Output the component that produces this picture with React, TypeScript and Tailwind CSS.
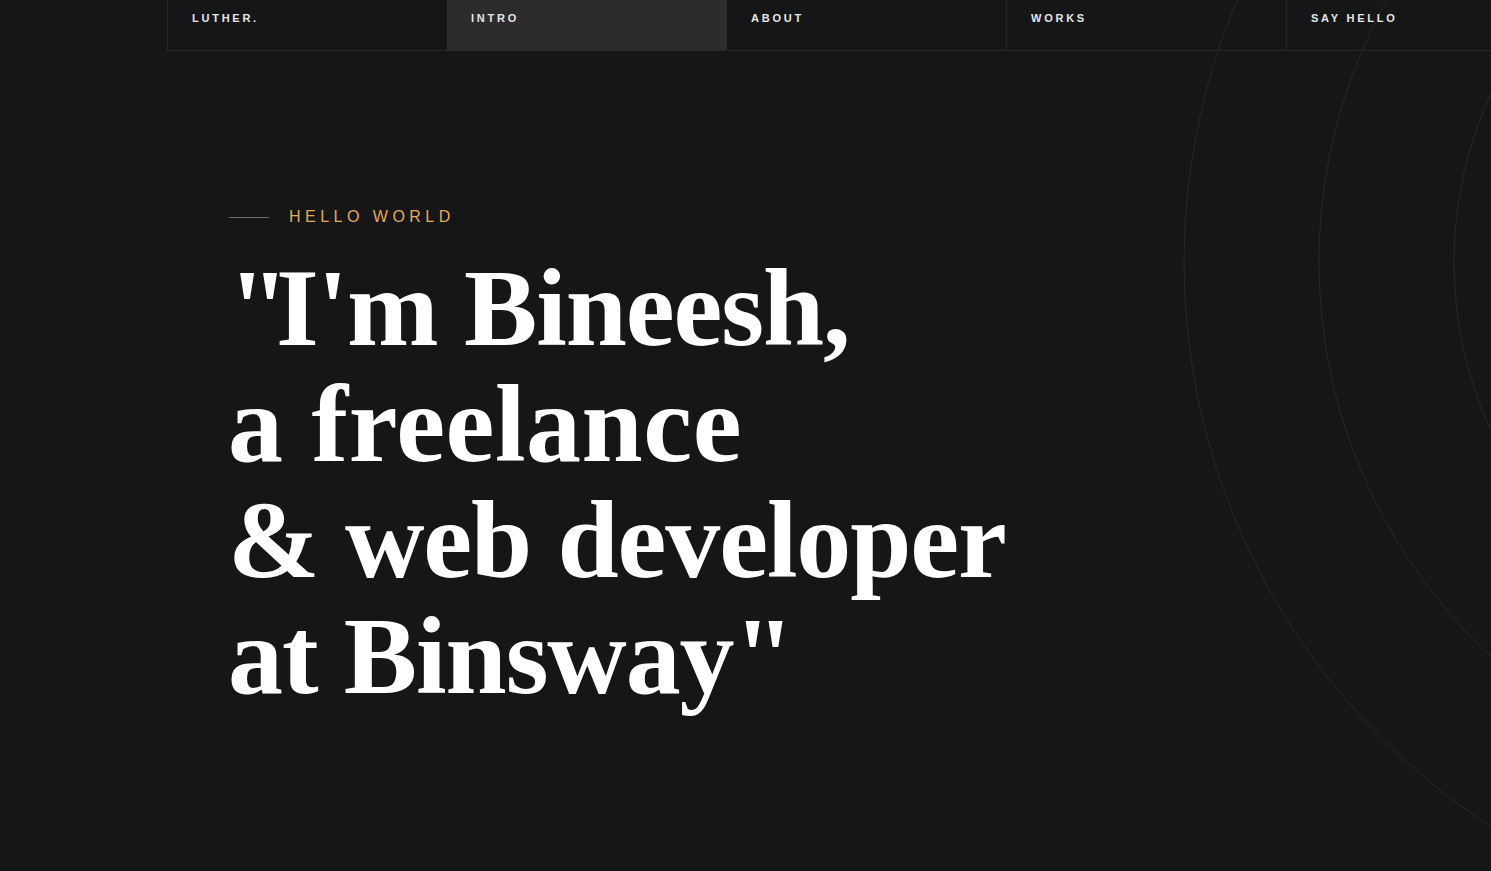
export default function App() {
  const cell =
    "shrink-0 px-6 pt-[10px] text-[11px] font-bold tracking-[0.25em] text-[#e6e6e6]";

  return (
    <div className="relative h-[871px] w-full overflow-hidden bg-[#151618] font-['Liberation_Sans',sans-serif]">
      {/* Background rings */}
      <svg
        className="pointer-events-none absolute left-0 top-0"
        width="1491"
        height="871"
        viewBox="0 0 1491 871"
        fill="none"
      >
        <circle cx="1857" cy="262" r="673" stroke="#2a2822" strokeWidth="1" />
        <circle cx="1857" cy="262" r="538" stroke="#2a2822" strokeWidth="1" />
        <circle cx="1857" cy="262" r="403" stroke="#2a2822" strokeWidth="1" />
      </svg>

      {/* Nav */}
      <nav className="relative ml-[167px] flex h-[51px] border-b border-l border-[#26272a]">
        <a href="#" className={`w-[279px] ${cell}`}>
          LUTHER.
        </a>
        <a href="#" className={`w-[280px] bg-[#2c2c2d] ${cell}`}>
          INTRO
        </a>
        <a href="#" className={`w-[280px] border-r border-[#26272a] ${cell}`}>
          ABOUT
        </a>
        <a href="#" className={`w-[280px] border-r border-[#26272a] ${cell}`}>
          WORKS
        </a>
        <a href="#" className={`w-[280px] ${cell}`}>
          SAY HELLO
        </a>
      </nav>

      {/* Hero */}
      <section className="relative pl-[228px] pt-[154px]">
        <div className="flex items-center gap-5 pl-px">
          <span className="h-px w-10 bg-[#6b6b6b]" />
          <span className="text-[16px] tracking-[0.28em] text-[#e8a94f]">
            HELLO WORLD
          </span>
        </div>
        <h1 className="mt-[21px] font-['Liberation_Serif',serif] text-[110px] font-bold leading-[116px] tracking-[-0.01em] text-white">
          <span className="tracking-[-0.12em]">"</span>I'm Bineesh,
          <br />
          <span className="tracking-[0.005em]">a freelance</span>
          <br />
          &amp; web developer
          <br />
          at Binsway"
        </h1>
      </section>
    </div>
  );
}
